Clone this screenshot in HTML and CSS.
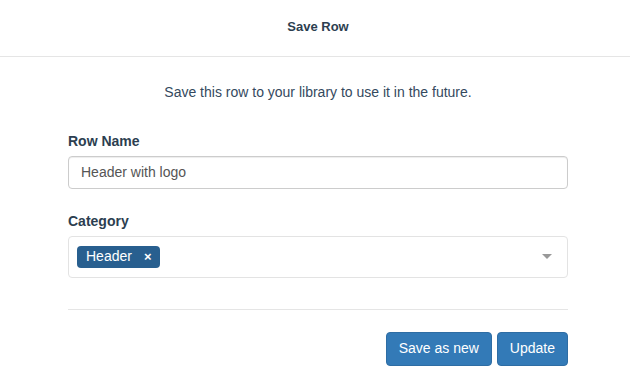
FILE: index.html
```html
<!DOCTYPE html>
<html lang="en">
<head>
    <meta charset="UTF-8">
    <title>Save Row</title>
    <link rel="stylesheet" href="styles.css">
</head>
<body>
    <div class="modal">
        <div class="modal-header">
            <h4 class="modal-title">Save Row</h4>
        </div>
        <div class="modal-body">
            <p class="intro">Save this row to your library to use it in the future.</p>

            <div class="form-group">
                <label for="rowName">Row Name</label>
                <input type="text" id="rowName" class="form-control" value="Header with logo">
            </div>

            <div class="form-group">
                <label>Category</label>
                <div class="select-box">
                    <span class="tag">Header <span class="tag-remove">&times;</span></span>
                    <span class="caret"></span>
                </div>
            </div>

            <div class="modal-footer">
                <button class="btn">Save as new</button>
                <button class="btn">Update</button>
            </div>
        </div>
    </div>
</body>
</html>
```

FILE: styles.css
```css
body {
    margin: 0;
    font-family: "Liberation Sans", Arial, sans-serif;
    font-size: 14px;
    line-height: 1.42857;
    color: #34495e;
    background: #fff;
    overflow: hidden;
}

.modal {
    width: 636px;
}

.modal-header {
    height: 57px;
    border-bottom: 1px solid #e5e5e5;
    display: flex;
    align-items: center;
    justify-content: center;
    box-sizing: border-box;
    padding-bottom: 2px;
}

.modal-title {
    margin: 0;
    font-size: 13px;
    font-weight: bold;
    color: #2c3e50;
}

.modal-body {
    padding: 26px 68px 0 68px;
}

.intro {
    margin: 0 0 29px;
    text-align: center;
    color: #34495e;
}

.form-group {
    margin-bottom: 12px;
}

label {
    display: block;
    font-weight: bold;
    color: #2c3e50;
    margin-bottom: 4px;
}

.form-control {
    display: block;
    width: 100%;
    box-sizing: border-box;
    height: 33px;
    padding: 6px 12px;
    font-family: inherit;
    font-size: 14px;
    color: #555;
    border: 1px solid #ccc;
    border-radius: 4px;
    box-shadow: inset 0 1px 1px rgba(0, 0, 0, 0.075);
    margin-bottom: 23px;
}

.select-box {
    height: 42px;
    box-sizing: border-box;
    border: 1px solid #e3e3e3;
    border-radius: 4px;
    display: flex;
    align-items: center;
    justify-content: space-between;
    padding: 0 15px 0 8px;
}

.tag {
    display: inline-flex;
    align-items: center;
    height: 22px;
    padding: 0 8px 0 9px;
    background: #285f8f;
    color: #fff;
    border-radius: 4px;
    font-size: 14px;
}

.tag-remove {
    font-weight: bold;
    font-size: 13px;
    margin-left: 12px;
}

.caret {
    width: 0;
    height: 0;
    border-left: 5px solid transparent;
    border-right: 5px solid transparent;
    border-top: 5px solid #999;
}

.modal-footer {
    margin-top: 31px;
    border-top: 1px solid #e5e5e5;
    padding-top: 22px;
    display: flex;
    justify-content: flex-end;
    gap: 5px;
}

.btn {
    font-family: inherit;
    font-size: 14px;
    line-height: 1.42857;
    padding: 6px 12px;
    color: #fff;
    background-color: #337ab7;
    border: 1px solid #2e6da4;
    border-radius: 4px;
    cursor: pointer;
}
```
